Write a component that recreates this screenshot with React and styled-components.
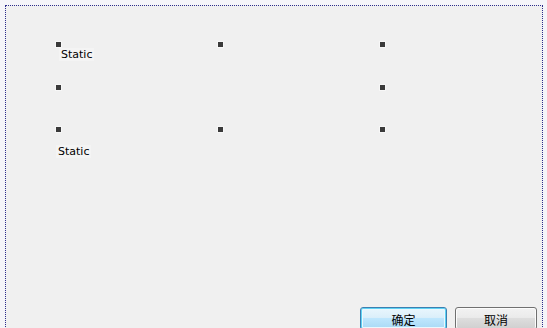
import React from "react";
import styled, { createGlobalStyle } from "styled-components";

const Global = createGlobalStyle`
  html, body {
    margin: 0;
    padding: 0;
    height: 100%;
    overflow: hidden;
    background: #f5f5f9;
  }
  #root { height: 100%; }
`;

const Page = styled.div`
  padding: 5px 4px 0 5px;
  box-sizing: border-box;
  height: 100%;
`;

const Frame = styled.div`
  box-sizing: border-box;
  width: 538px;
  height: 340px;
  border: 1px dotted #2c2c8c;
  background: #f0f0f0;
  display: flex;
  flex-direction: column;
  padding: 36px 5px 14px 50px;
  font-family: "DejaVu Sans", Tahoma, sans-serif;
  font-size: 11px;
  color: #000;
`;

const ControlGrid = styled.div`
  display: grid;
  grid-template-columns: 162px 162px 1fr;
  grid-template-rows: 43px 42px auto;
`;

const Cell = styled.div`
  display: flex;
  flex-direction: column;
  align-items: flex-start;
`;

const Handle = styled.span`
  display: block;
  width: 5px;
  height: 5px;
  background: #3a3a3a;
  box-shadow: 0 0 0 1px #f7f7f7;
`;

const Label = styled.span`
  display: block;
  margin-top: ${(p) => p.$top}px;
  margin-left: ${(p) => p.$left}px;
  padding: 0 2px;
  line-height: 13px;
  background: #f4f4f4;
`;

const ButtonRow = styled.div`
  margin-top: auto;
  display: flex;
  justify-content: flex-end;
  gap: 8px;
`;

const Button = styled.button`
  box-sizing: border-box;
  width: ${(p) => p.$w}px;
  height: 23px;
  border-radius: 3px;
  font-family: "Noto Sans CJK SC", "DejaVu Sans", sans-serif;
  font-size: 12px;
  line-height: 1;
  color: #000;
  padding: 3px 0 0;
  border: 1px solid ${(p) => (p.$primary ? "#3c7fb1" : "#707070")};
  background: ${(p) =>
    p.$primary
      ? "linear-gradient(#e9f6fd 0%, #dbeffa 45%, #bee6fd 50%, #a7d9f5 100%)"
      : "linear-gradient(#f2f2f2 0%, #ebebeb 45%, #dddddd 50%, #cfcfcf 100%)"};
  box-shadow: ${(p) =>
    p.$primary
      ? "inset 0 0 0 1px #5ed2f4, inset 0 0 0 2px #eaf7fd"
      : "inset 0 0 0 1px #fcfcfc"};
`;

const cells = [
  { label: "Static", top: 1, left: 3 },
  {},
  {},
  {},
  { empty: true },
  {},
  { label: "Static", top: 13, left: 0 },
  {},
  {},
];

export default function App() {
  return (
    <>
      <Global />
      <Page>
        <Frame>
          <ControlGrid>
            {cells.map((c, i) => (
              <Cell key={i}>
                {!c.empty && <Handle />}
                {c.label && (
                  <Label $top={c.top} $left={c.left}>
                    {c.label}
                  </Label>
                )}
              </Cell>
            ))}
          </ControlGrid>
          <ButtonRow>
            <Button $primary $w={87}>确定</Button>
            <Button $w={82}>取消</Button>
          </ButtonRow>
        </Frame>
      </Page>
    </>
  );
}
